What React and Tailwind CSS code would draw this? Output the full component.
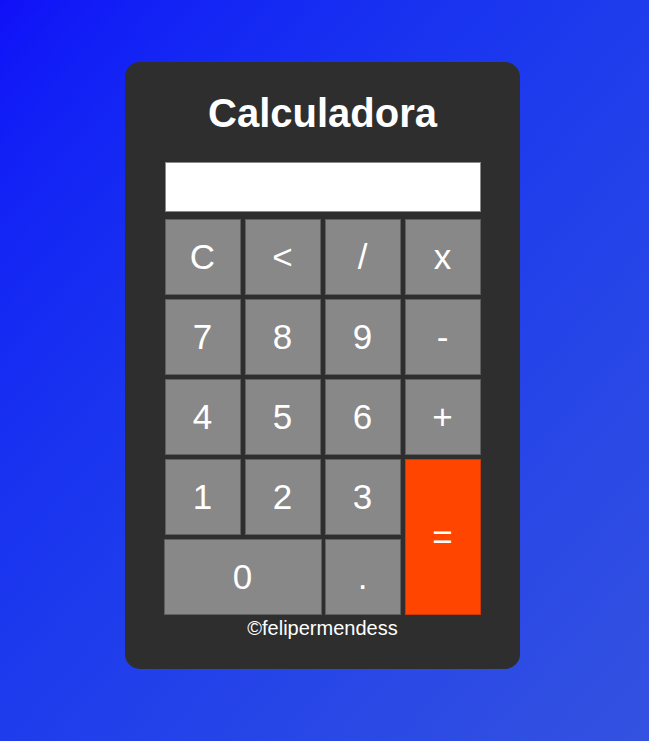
import React, { useState } from 'react';

// Calculator card on a blue gradient page
const keys = [
  { label: 'C', cls: '' },
  { label: '<', cls: '' },
  { label: '/', cls: '' },
  { label: 'x', cls: '' },
  { label: '7', cls: '' },
  { label: '8', cls: '' },
  { label: '9', cls: '' },
  { label: '-', cls: '' },
  { label: '4', cls: '' },
  { label: '5', cls: '' },
  { label: '6', cls: '' },
  { label: '+', cls: '' },
  { label: '1', cls: '' },
  { label: '2', cls: '' },
  { label: '3', cls: '' },
  { label: '=', cls: 'row-span-2 bg-[#ff4500] border-[#c83a0c]' },
  { label: '0', cls: 'col-span-2 -mx-px' },
  { label: '.', cls: '' },
];

export default function App() {
  const [value, setValue] = useState('');

  const press = (k) => {
    if (k === 'C') return setValue('');
    if (k === '<') return setValue((v) => v.slice(0, -1));
    if (k === '=') {
      try {
        // eslint-disable-next-line no-new-func
        const r = Function(`return (${value.replace(/x/g, '*')})`)();
        setValue(String(r));
      } catch {
        setValue('');
      }
      return;
    }
    setValue((v) => v + k);
  };

  return (
    <div
      className="min-h-screen bg-linear-to-br from-[#1010f8] to-[#3452e0] flex justify-center pt-[62px]"
      style={{ fontFamily: '"Liberation Sans", Arial, sans-serif' }}
    >
      <div className="w-[395px] h-[607px] mr-[4px] bg-[#2e2e2e] rounded-[15px] flex flex-col items-center">
        <h1 className="mt-[28px] text-[40px] leading-[46px] font-bold text-white">Calculadora</h1>

        <input
          readOnly
          value={value}
          className="mt-[26px] w-[316px] h-[50px] bg-white border border-[#8a8a8a] text-right text-[30px] px-2 outline-none"
        />

        <div className="mt-[7px] grid grid-cols-[repeat(4,76px)] auto-rows-[76px] gap-x-[4px] gap-y-[4px]">
          {keys.map((k) => (
            <button
              key={k.label}
              onClick={() => press(k.label)}
              className={`flex items-center justify-center border text-white text-[35px] ${
                k.cls || 'bg-[#888888] border-[#5f5f5f]'
              } ${k.cls && !k.cls.includes('bg-') ? 'bg-[#888888] border-[#5f5f5f]' : ''}`}
            >
              {k.label}
            </button>
          ))}
        </div>

        <p className="mt-[2px] text-white text-[20px] leading-[23px]">©felipermendess</p>
      </div>
    </div>
  );
}
